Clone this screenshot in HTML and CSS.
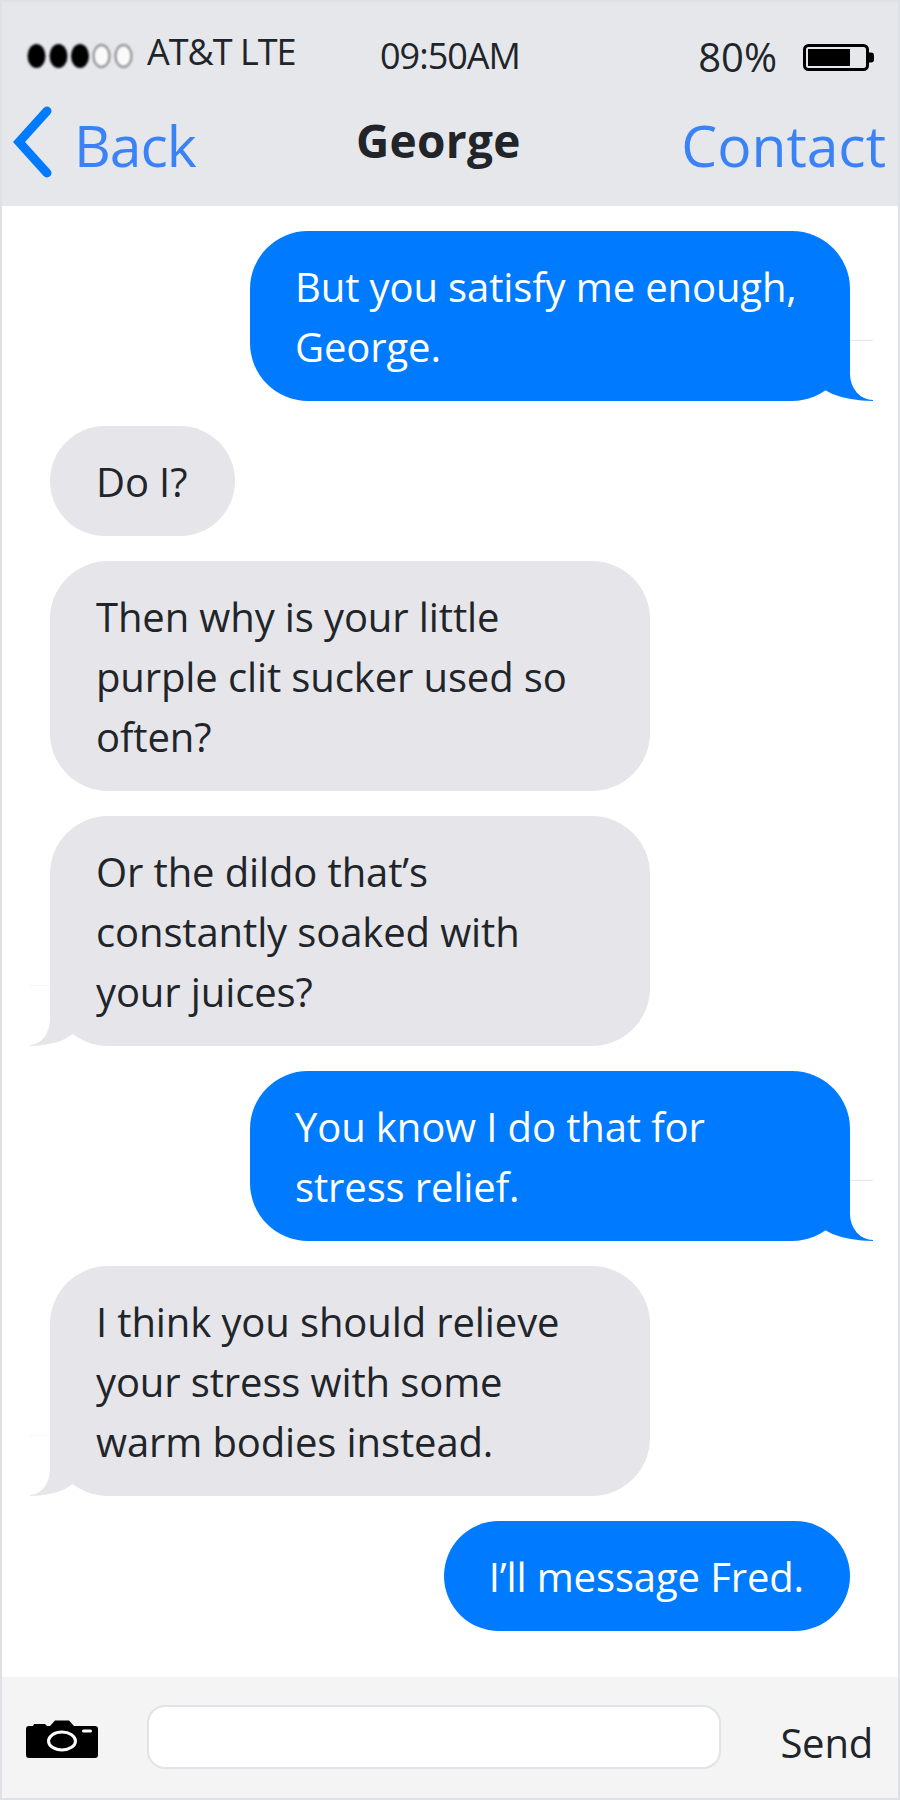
FILE: index.html
```html
<!DOCTYPE html>
<html lang="en">
<head>
    <meta charset="UTF-8">
    <meta name="viewport" content="width=device-width, initial-scale=1.0">
    <title>George</title>
    <link rel="stylesheet" href="styles.css">
</head>
<body>
    <div class="phone">
        <header class="top">
            <div class="status">
                <div class="carrier">
                    <svg class="signal" width="108" height="26" viewBox="0 0 108 26">
                        <ellipse cx="9.500" cy="13" rx="9" ry="12" fill="#000"/>
                        <ellipse cx="31.500" cy="13" rx="9" ry="12" fill="#000"/>
                        <ellipse cx="53" cy="13" rx="9" ry="12" fill="#000"/>
                        <ellipse cx="74.500" cy="13" rx="8" ry="11" fill="#fafafa" stroke="#888" stroke-width="2"/>
                        <ellipse cx="96.500" cy="13" rx="8" ry="11" fill="#fafafa" stroke="#888" stroke-width="2"/>
                    </svg>
                    <span class="carrier-name">AT&amp;T LTE</span>
                </div>
                <span class="time">09:50AM</span>
                <div class="power">
                    <span class="percent">80%</span>
                    <svg class="battery" width="71" height="27" viewBox="0 0 71 27">
                        <rect x="1.500" y="1.500" width="63" height="24" rx="4" fill="none" stroke="#000" stroke-width="3"/>
                        <rect x="5" y="5" width="42" height="17" fill="#000"/>
                        <path d="M66 8.500h2a3 3 0 0 1 3 3v4a3 3 0 0 1-3 3h-2z" fill="#000"/>
                    </svg>
                </div>
            </div>
            <nav class="nav">
                <a class="back">
                    <svg class="chevron" width="40" height="74" viewBox="0 0 40 74">
                        <path d="M34 6 L6 37 L34 68" fill="none" stroke="#007bff" stroke-width="9" stroke-linecap="round" stroke-linejoin="miter"/>
                    </svg>
                    <span>Back</span>
                </a>
                <span class="name">George</span>
                <a class="contact">Contact</a>
            </nav>
        </header>

        <main class="messages">
            <div class="msg sent tail">But you satisfy me enough, George.</div>
            <div class="msg received">Do I?</div>
            <div class="msg received">Then why is your little purple clit sucker used so often?</div>
            <div class="msg received tail">Or the dildo that’s constantly soaked with your juices?</div>
            <div class="msg sent tail">You know I do that for stress relief.</div>
            <div class="msg received tail">I think you should relieve your stress with some warm bodies instead.</div>
            <div class="msg sent">I’ll message Fred.</div>
        </main>

        <footer class="composer">
            <svg class="camera" width="72" height="38" viewBox="0 0 72 38">
                <path d="M3 6h4l1-2h11l2 2h3l5-5.500h14l5 5.500h21a3 3 0 0 1 3 3v26a3 3 0 0 1-3 3H3a3 3 0 0 1-3-3V9a3 3 0 0 1 3-3z" fill="#000"/>
                <ellipse cx="36" cy="21" rx="13.500" ry="9" fill="none" stroke="#fff" stroke-width="3"/>
                <rect x="56" y="9.500" width="10" height="3" rx="1.500" fill="#fff"/>
            </svg>
            <div class="input"></div>
            <span class="send">Send</span>
        </footer>
    </div>
</body>
</html>
```
FILE: styles.css
```css
* {
    margin: 0;
    padding: 0;
    box-sizing: border-box;
}

body {
    width: 900px;
    height: 1800px;
    background: #ffffff;
    color: #212529;
    font-family: "Open Sans", "Noto Sans", sans-serif;
}

.phone {
    width: 900px;
    height: 1800px;
    border: 2px solid #dee2e6;
    display: flex;
    flex-direction: column;
    overflow: hidden;
}

/* top bar */
.top {
    height: 204px;
    background: #e5e7eb;
    display: flex;
    flex-direction: column;
}

.status {
    height: 95px;
    padding: 24px 24px 0 25px;
    display: flex;
    align-items: flex-start;
}

.carrier {
    width: 353px;
    display: flex;
    align-items: center;
    gap: 12px;
    margin-top: 14px;
}

.signal {
    filter: blur(1px);
}

.carrier-name {
    font-size: 36px;
    line-height: 40px;
    letter-spacing: -1px;
    margin-top: -8px;
}

.time {
    font-size: 36px;
    line-height: 40px;
    letter-spacing: -1px;
    margin-top: 10px;
}

.power {
    margin-left: auto;
    display: flex;
    align-items: center;
    gap: 26px;
    margin-top: 7px;
}

.percent {
    font-size: 40px;
    line-height: 48px;
}

.nav {
    flex: 1;
    padding: 0 12px 0 11px;
    display: flex;
    align-items: flex-start;
    color: #3b82f6;
    font-size: 57px;
    line-height: 70px;
}

.back {
    width: 343px;
    display: flex;
    gap: 21px;
}

.chevron {
    margin-top: 8px;
}

.back span {
    margin-top: 13px;
    letter-spacing: -1px;
}

.name {
    color: #212529;
    font-size: 46px;
    font-weight: 700;
    line-height: 60px;
    letter-spacing: 0.3px;
    margin-top: 13px;
}

.contact {
    margin-left: auto;
    margin-top: 13px;
}

/* messages */
.messages {
    flex: 1;
    padding: 25px 48px 0;
    display: flex;
    flex-direction: column;
    gap: 25px;
}

.msg {
    position: relative;
    width: fit-content;
    max-width: 600px;
    padding: 26px 46px 24px 45px;
    border-radius: 58px;
    font-size: 40px;
    line-height: 60px;
    letter-spacing: -0.12px;
}

.sent {
    align-self: flex-end;
    background: #007bff;
    color: #ffffff;
}

.received {
    align-self: flex-start;
    padding-left: 46px;
    padding-right: 48px;
    background: #e5e5ea;
}

/* bubble tails */
.tail::before,
.tail::after {
    content: "";
    position: absolute;
}

.tail::before {
    bottom: 0;
}

.tail::after {
    bottom: 1px;
}

.sent.tail::before {
    right: -23px;
    width: 58px;
    height: 60px;
    background: #007bff;
    border-bottom-left-radius: 58px 25px;
}

.sent.tail::after {
    right: -23px;
    width: 23px;
    height: 59px;
    background: #ffffff;
    border-top: 1px solid #dbe8f6;
    border-bottom-left-radius: 23px 26px;
}

.received.tail::before {
    left: -20px;
    width: 50px;
    height: 60px;
    background: #e5e5ea;
    border-bottom-right-radius: 50px 25px;
}

.received.tail::after {
    left: -20px;
    width: 20px;
    height: 59px;
    background: #ffffff;
    border-top: 1px solid #f6f6f6;
    border-bottom-right-radius: 20px 26px;
}

/* bottom bar */
.composer {
    height: 121px;
    background: #f4f4f5;
    display: flex;
    align-items: center;
    padding: 0 25px 0 24px;
}

.camera {
    margin-top: 3px;
}

.input {
    width: 574px;
    height: 64px;
    margin: -1px 0 0 49px;
    background: #ffffff;
    border: 2px solid #e0e3e8;
    border-radius: 18px;
}

.send {
    margin: 11px 0 0 auto;
    font-size: 40px;
    line-height: 50px;
    letter-spacing: -0.2px;
}
```
